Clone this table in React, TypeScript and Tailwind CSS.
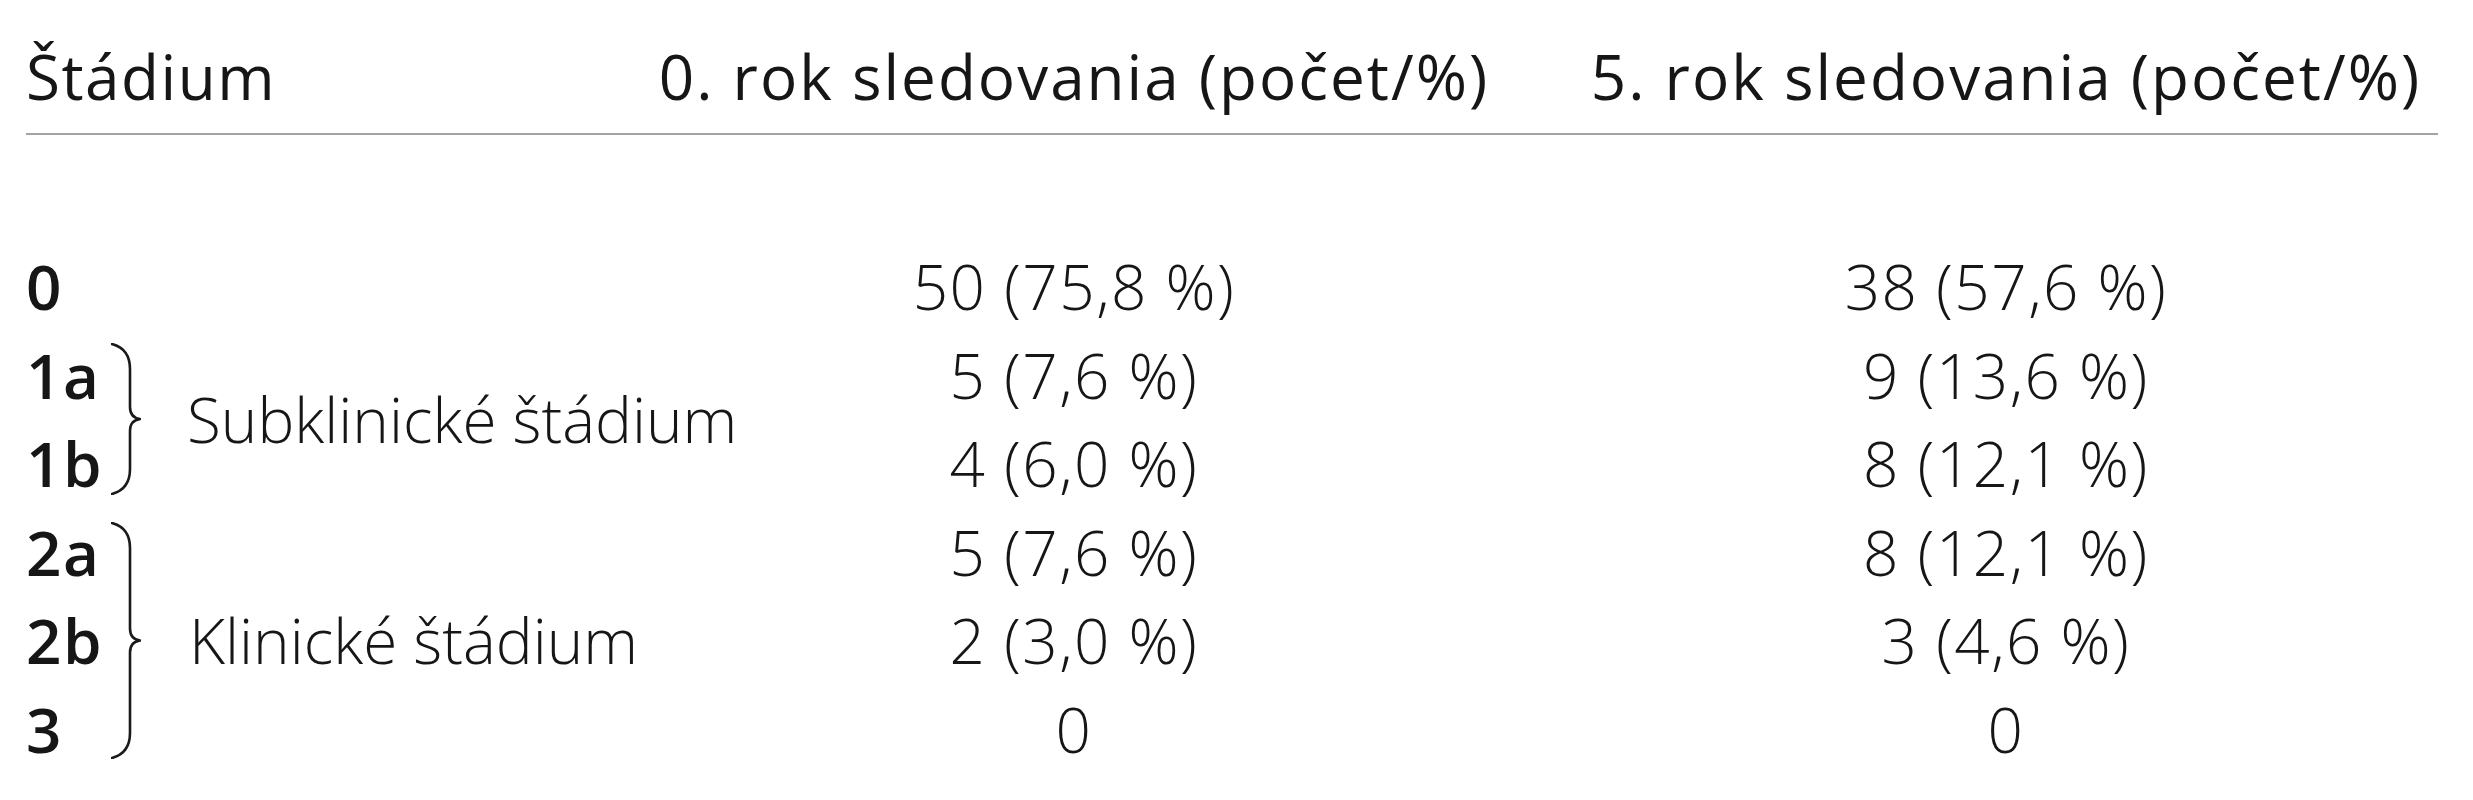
import React from "react";

type Row = { stage: string; y0: string; y5: string };

const rows: Row[] = [
  { stage: "0", y0: "50 (75,8 %)", y5: "38 (57,6 %)" },
  { stage: "1a", y0: "5 (7,6 %)", y5: "9 (13,6 %)" },
  { stage: "1b", y0: "4 (6,0 %)", y5: "8 (12,1 %)" },
  { stage: "2a", y0: "5 (7,6 %)", y5: "8 (12,1 %)" },
  { stage: "2b", y0: "2 (3,0 %)", y5: "3 (4,6 %)" },
  { stage: "3", y0: "0", y5: "0" },
];

const rowStart = [
  "row-start-1",
  "row-start-2",
  "row-start-3",
  "row-start-4",
  "row-start-5",
  "row-start-6",
];

function Brace({ h }: { h: number }) {
  const m = h / 2;
  const d = `M1,1 C12,4 19,12 19,26 L19,${m - 12} C19,${m - 5} 22,${m - 1} 29,${m} C22,${m + 1} 19,${m + 5} 19,${m + 12} L19,${h - 26} C19,${h - 12} 12,${h - 4} 1,${h - 1}`;
  return (
    <svg width="30" height={h} viewBox={`0 0 30 ${h}`} fill="none">
      <path d={d} stroke="#1a1a1a" strokeWidth="2.6" strokeLinecap="round" strokeLinejoin="round" />
    </svg>
  );
}

export default function App() {
  return (
    <div className="w-[2473px] h-[800px] bg-white text-[#161616] font-['Open_Sans',sans-serif] text-[62px] tracking-[1.5px]">
      <div className="w-[2438px] pl-[26px] pt-[32px]">
        <div className="grid grid-cols-[85px_30px_431px_1004px_860px] leading-[88px] pb-[13px] border-b-2 border-[#a3a3a3]">
          <div className="col-span-3 font-normal">Štádium</div>
          <div className="text-center font-normal tracking-[2px] whitespace-nowrap">0. rok sledovania (počet/%)</div>
          <div className="text-center font-normal tracking-[2px] whitespace-nowrap">5. rok sledovania (počet/%)</div>
        </div>

        <div className="mt-[107px] grid grid-cols-[85px_30px_431px_1004px_860px] grid-rows-[repeat(6,88.5px)] leading-[88.5px]">
          {rows.map((r, i) => (
            <React.Fragment key={r.stage}>
              <div className={`col-start-1 ${rowStart[i]} font-semibold`}>{r.stage}</div>
              <div className={`col-start-4 ${rowStart[i]} text-center font-light whitespace-nowrap`}>{r.y0}</div>
              <div className={`col-start-5 ${rowStart[i]} text-center font-light whitespace-nowrap`}>{r.y5}</div>
            </React.Fragment>
          ))}

          <div className="col-start-2 row-start-2 row-span-2 flex items-center">
            <Brace h={152} />
          </div>
          <div className="col-start-3 row-start-2 row-span-2 flex items-center pl-[46px] font-light tracking-normal whitespace-nowrap">
            Subklinické štádium
          </div>

          <div className="col-start-2 row-start-4 row-span-3 flex items-center">
            <Brace h={237} />
          </div>
          <div className="col-start-3 row-start-4 row-span-3 flex items-center pl-[48px] font-light tracking-normal whitespace-nowrap">
            Klinické štádium
          </div>
        </div>
      </div>
    </div>
  );
}
